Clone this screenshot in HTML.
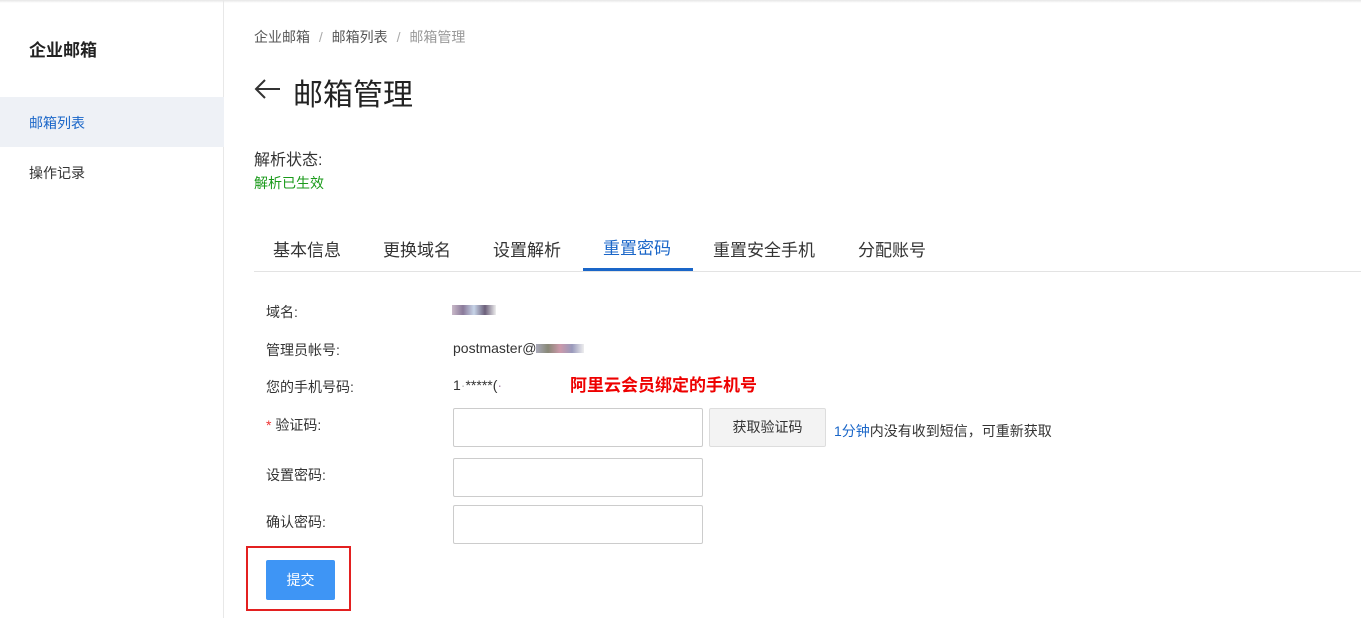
<!DOCTYPE html>
<html><head><meta charset="utf-8"><style>
*{margin:0;padding:0;box-sizing:border-box}
body{width:1361px;height:618px;overflow:hidden;background:#fff;font-family:"Liberation Sans","Noto Sans CJK SC",sans-serif;color:#333;position:relative}
.a{position:absolute;white-space:nowrap}
.side{position:absolute;left:0;top:0;width:224px;height:618px;border-right:1px solid #e8e8e8}
.top{position:absolute;left:0;top:0;width:1361px;height:3px;background:linear-gradient(#e6e6e6,#fff)}
.inp{position:absolute;width:250px;height:39px;border:1px solid #ccc;border-radius:2px;background:#fff}
.lb{font-size:14px;color:#333}
</style></head><body>
<div class="top"></div>
<div class="side">
<div class="a" style="left:29px;top:36px;font-size:17px;font-weight:bold;color:#222">企业邮箱</div>
<div style="position:absolute;left:0;top:97px;width:224px;height:50px;background:#eef1f6"></div>
<div class="a" style="left:29px;top:113px;font-size:14px;color:#1a66c8">邮箱列表</div>
<div class="a" style="left:29px;top:163px;font-size:14px;color:#333">操作记录</div>
</div>
<div class="a" style="left:254px;top:27px;font-size:14px;color:#555">企业邮箱 <span style="color:#aaa;margin:0 5px">/</span> 邮箱列表 <span style="color:#aaa;margin:0 5px">/</span> <span style="color:#999">邮箱管理</span></div>
<svg class="a" style="left:254px;top:78px" width="28" height="22" viewBox="0 0 28 22"><path d="M26 11H3M11 2L2 11l9 9" fill="none" stroke="#333" stroke-width="2"/></svg>
<div class="a" style="left:293px;top:70px;font-size:30px;color:#222">邮箱管理</div>
<div class="a" style="left:254px;top:146px;font-size:16px;color:#333">解析状态:</div>
<div class="a" style="left:254px;top:173px;font-size:14px;color:#1a9a1a">解析已生效</div>
<div style="position:absolute;left:254px;top:271px;width:1107px;height:1px;background:#e3e3e3"></div>
<div class="a" style="left:273px;top:236px;font-size:17px;color:#333">基本信息</div>
<div class="a" style="left:383px;top:236px;font-size:17px;color:#333">更换域名</div>
<div class="a" style="left:493px;top:236px;font-size:17px;color:#333">设置解析</div>
<div class="a" style="left:603px;top:234px;font-size:17px;color:#1a66c8">重置密码</div>
<div style="position:absolute;left:583px;top:268px;width:110px;height:3px;background:#1a66c8"></div>
<div class="a" style="left:713px;top:236px;font-size:17px;color:#333">重置安全手机</div>
<div class="a" style="left:858px;top:236px;font-size:17px;color:#333">分配账号</div>
<div class="a lb" style="left:266px;top:302px">域名:</div>
<div class="a" style="left:452px;top:305px;width:44px;height:10px;background:linear-gradient(90deg,#c9b9c9,#8a7a9a,#c7d4e8,#6b5f7a,#eee)"></div>
<div class="a lb" style="left:266px;top:340px">管理员帐号:</div>
<div class="a lb" style="left:453px;top:340px">postmaster@<span style="display:inline-block;width:48px;height:9px;background:linear-gradient(90deg,#aab,#887,#c9a,#99b,#eee)"></span></div>
<div class="a lb" style="left:266px;top:377px">您的手机号码:</div>
<div class="a lb" style="left:453px;top:377px">1<span style="color:#bbb">·</span>*****(<span style="color:#a8a">·</span></div>
<div class="a" style="left:570px;top:371px;font-size:17px;font-weight:bold;color:#e00">阿里云会员绑定的手机号</div>
<div class="a lb" style="left:266px;top:415px"><span style="color:#e33">*</span> 验证码:</div>
<div class="inp" style="left:453px;top:408px"></div>
<div class="a" style="left:709px;top:408px;width:117px;height:39px;border:1px solid #ddd;background:#f3f3f3;border-radius:2px;font-size:14px;text-align:center;line-height:37px;color:#333">获取验证码</div>
<div class="a lb" style="left:834px;top:421px"><span style="color:#1a66c8">1分钟</span>内没有收到短信，可重新获取</div>
<div class="a lb" style="left:266px;top:465px">设置密码:</div>
<div class="inp" style="left:453px;top:458px"></div>
<div class="a lb" style="left:266px;top:512px">确认密码:</div>
<div class="inp" style="left:453px;top:505px"></div>
<div style="position:absolute;left:246px;top:546px;width:105px;height:65px;border:2px solid #e32020"></div>
<div class="a" style="left:266px;top:560px;width:69px;height:40px;background:#3e95f5;border-radius:2px;color:#fff;font-size:14px;text-align:center;line-height:40px">提交</div>
</body></html>
